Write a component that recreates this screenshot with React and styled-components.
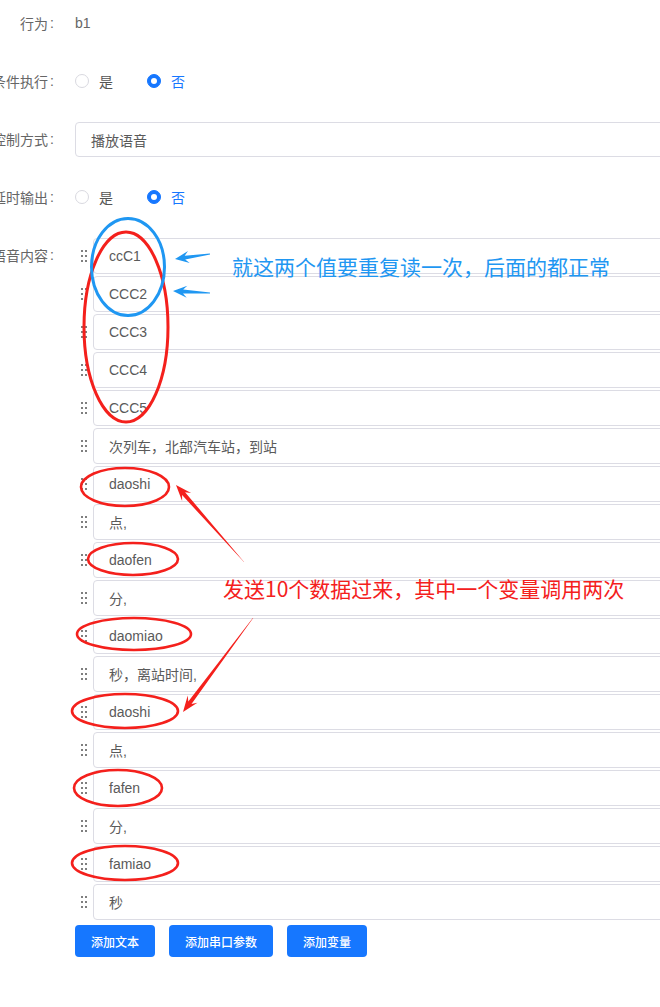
import React from "react";
import styled, { createGlobalStyle } from "styled-components";

const GlobalStyle = createGlobalStyle`
  html, body {
    margin: 0;
    padding: 0;
    overflow: hidden;
    background: #ffffff;
  }
  body {
    font-family: "Liberation Sans", "Noto Sans CJK SC", sans-serif;
  }
`;

const Page = styled.div`
  position: relative;
  width: 660px;
  height: 1007px;
  overflow: hidden;
`;

const Form = styled.div`
  display: flex;
  flex-direction: column;
  gap: 22px;
  padding-top: 5px;
  width: 900px;
`;

const Item = styled.div`
  display: flex;
  align-items: flex-start;
`;

const Label = styled.div`
  flex: none;
  width: 75px;
  height: 36px;
  box-sizing: border-box;
  padding-right: 21px;
  display: flex;
  justify-content: flex-end;
  align-items: center;
  font-size: 14px;
  color: #666666;
  white-space: nowrap;
  &::after {
    content: ":";
    margin-left: 2px;
  }
`;

const Control = styled.div`
  flex: 1;
  min-width: 0;
`;

const PlainText = styled.div`
  height: 36px;
  display: flex;
  align-items: center;
  font-size: 14px;
  color: #666666;
`;

const RadioGroup = styled.div`
  height: 36px;
  display: flex;
  align-items: center;
  gap: 34px;
`;

const RadioOption = styled.label`
  display: flex;
  align-items: center;
  gap: 10px;
  font-size: 14px;
  color: ${(p) => (p.$checked ? "#1677ff" : "#555555")};
`;

const RadioCircle = styled.span`
  position: relative;
  width: 14px;
  height: 14px;
  box-sizing: border-box;
  border-radius: 50%;
  border: 1px solid ${(p) => (p.$checked ? "#1677ff" : "#d9d9e0")};
  background: ${(p) => (p.$checked ? "#1677ff" : "#ffffff")};
  &::after {
    content: "";
    display: ${(p) => (p.$checked ? "block" : "none")};
    position: absolute;
    left: 50%;
    top: 50%;
    width: 6px;
    height: 6px;
    margin: -3px 0 0 -3px;
    border-radius: 50%;
    background: #ffffff;
  }
`;

const InputBox = styled.div`
  flex: 1;
  height: 36px;
  box-sizing: border-box;
  border: 1px solid #dcdce4;
  border-radius: 4px;
  padding: 0 15px;
  display: flex;
  align-items: center;
  font-size: 14px;
  color: #5a5a5a;
  background: #ffffff;
`;

const ControlInputBox = styled(InputBox)`
  margin-top: 1px;
  height: 35px;
`;

const List = styled.div`
  display: flex;
  flex-direction: column;
  gap: 2px;
  margin-top: 1px;
`;

const ListRow = styled.div`
  display: flex;
  align-items: center;
`;

const Handle = styled.div`
  flex: none;
  width: 18px;
  display: flex;
  justify-content: center;
  align-items: center;
`;

const ButtonBar = styled.div`
  display: flex;
  gap: 14px;
  margin-top: 5px;
`;

const Button = styled.button`
  height: 32px;
  padding: 0 16px;
  border: none;
  border-radius: 4px;
  background: #1677ff;
  color: #ffffff;
  font-family: "Noto Sans CJK SC", sans-serif;
  font-size: 12px;
  font-weight: 500;
  cursor: pointer;
`;

const Overlay = styled.svg`
  position: absolute;
  left: 0;
  top: 0;
  width: 660px;
  height: 1007px;
  pointer-events: none;
`;

const Note = styled.div`
  position: absolute;
  left: ${(p) => p.$x}px;
  top: ${(p) => p.$y}px;
  font-family: "Noto Sans CJK SC", sans-serif;
  font-size: 21px;
  line-height: 1;
  white-space: nowrap;
  color: ${(p) => p.$color};
  pointer-events: none;
`;

function DragDots() {
  return (
    <svg width="6" height="12" viewBox="0 0 6 12">
      {[0, 5, 10].map((y) =>
        [0, 4].map((x) => <rect key={`${x}-${y}`} x={x} y={y} width="2" height="2" fill="#7f7f7f" />)
      )}
    </svg>
  );
}

function Radio({ options, value }) {
  return (
    <RadioGroup>
      {options.map((o) => (
        <RadioOption key={o} $checked={o === value}>
          <RadioCircle $checked={o === value} />
          {o}
        </RadioOption>
      ))}
    </RadioGroup>
  );
}

function arrowPoints([tx, ty], [px, py], hl, hw, sw, tw) {
  const dx = px - tx;
  const dy = py - ty;
  const L = Math.hypot(dx, dy);
  const ux = dx / L;
  const uy = dy / L;
  const nx = -uy;
  const ny = ux;
  const bx = px - ux * hl * 0.72;
  const by = py - uy * hl * 0.72;
  const hx = px - ux * hl;
  const hy = py - uy * hl;
  const pts = [
    [tx + nx * tw, ty + ny * tw],
    [bx + nx * sw, by + ny * sw],
    [hx + nx * hw, hy + ny * hw],
    [px, py],
    [hx - nx * hw, hy - ny * hw],
    [bx - nx * sw, by - ny * sw],
    [tx - nx * tw, ty - ny * tw],
  ];
  return pts.map((p) => p.map((v) => v.toFixed(1)).join(",")).join(" ");
}

const voiceItems = [
  "ccC1",
  "CCC2",
  "CCC3",
  "CCC4",
  "CCC5",
  "次列车，北部汽车站，到站",
  "daoshi",
  "点,",
  "daofen",
  "分,",
  "daomiao",
  "秒，离站时间,",
  "daoshi",
  "点,",
  "fafen",
  "分,",
  "famiao",
  "秒",
];

const BLUE = "#1f97f2";
const RED = "#f4201c";

const redEllipses = [
  { cx: 125, cy: 487, rx: 44, ry: 19 },
  { cx: 133, cy: 559, rx: 45, ry: 16 },
  { cx: 134, cy: 634, rx: 57, ry: 16 },
  { cx: 125, cy: 711, rx: 53, ry: 17 },
  { cx: 118, cy: 788, rx: 44, ry: 18 },
  { cx: 125, cy: 863, rx: 53, ry: 17 },
];

export default function App() {
  return (
    <Page>
      <GlobalStyle />
      <Form>
        <Item>
          <Label>行为</Label>
          <Control>
            <PlainText>b1</PlainText>
          </Control>
        </Item>
        <Item>
          <Label>条件执行</Label>
          <Control>
            <Radio options={["是", "否"]} value="否" />
          </Control>
        </Item>
        <Item>
          <Label>控制方式</Label>
          <Control>
            <ListRow>
              <ControlInputBox>播放语音</ControlInputBox>
            </ListRow>
          </Control>
        </Item>
        <Item>
          <Label>延时输出</Label>
          <Control>
            <Radio options={["是", "否"]} value="否" />
          </Control>
        </Item>
        <Item>
          <Label>语音内容</Label>
          <Control>
            <List>
              {voiceItems.map((t, i) => (
                <ListRow key={i}>
                  <Handle>
                    <DragDots />
                  </Handle>
                  <InputBox>{t}</InputBox>
                </ListRow>
              ))}
            </List>
            <ButtonBar>
              <Button>添加文本</Button>
              <Button>添加串口参数</Button>
              <Button>添加变量</Button>
            </ButtonBar>
          </Control>
        </Item>
      </Form>

      <Overlay viewBox="0 0 660 1007">
        <ellipse cx="126" cy="327" rx="42" ry="95" fill="none" stroke={RED} strokeWidth="3" />
        <ellipse cx="128" cy="267" rx="36.5" ry="48.5" fill="none" stroke={BLUE} strokeWidth="3" />
        {redEllipses.map((e, i) => (
          <ellipse key={i} {...e} fill="none" stroke={RED} strokeWidth="2.6" />
        ))}
        <polygon points={arrowPoints([210, 254], [175, 259], 14, 6, 1.9, 0.5)} fill={BLUE} />
        <polygon points={arrowPoints([210, 293], [173, 291], 14, 6, 1.9, 0.5)} fill={BLUE} />
        <polygon points={arrowPoints([244, 562], [176, 485], 16, 6, 2, 0.2)} fill={RED} />
        <polygon points={arrowPoints([253, 618], [183, 712], 16, 6, 2, 0.2)} fill={RED} />
      </Overlay>
      <Note $x={232} $y={256} $color={BLUE}>
        就这两个值要重复读一次，后面的都正常
      </Note>
      <Note $x={223} $y={578} $color={RED}>
        发送10个数据过来，其中一个变量调用两次
      </Note>
    </Page>
  );
}
